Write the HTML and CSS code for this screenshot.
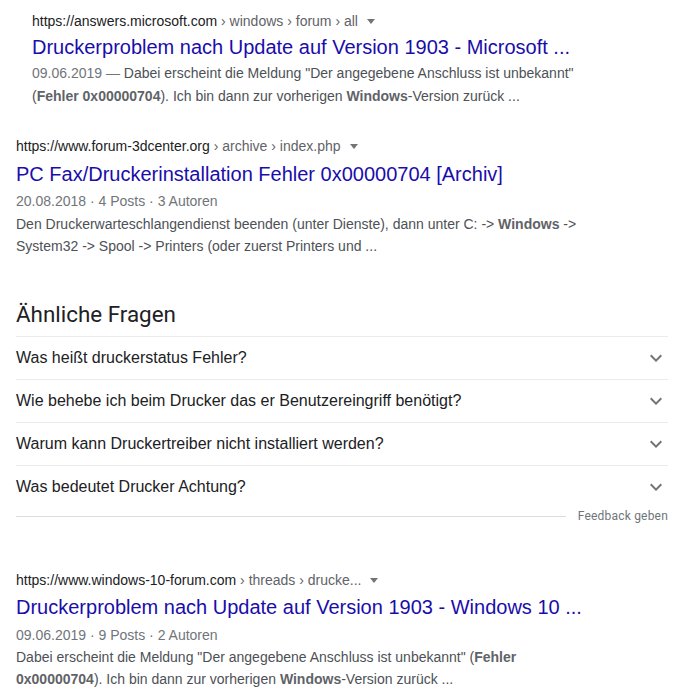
FILE: index.html
```html
<!DOCTYPE html>
<html lang="de">
<head>
<meta charset="utf-8">
<link rel="stylesheet" href="styles.css">
</head>
<body>
<div class="page">
  <div class="result nested">
    <div class="url"><span class="host">https://answers.microsoft.com</span><span class="crumb"> › windows › forum › all</span><span class="caret"></span></div>
    <a class="title">Druckerproblem nach Update auf Version 1903 - Microsoft ...</a>
    <div class="snippet"><span class="date">09.06.2019 — </span>Dabei erscheint die Meldung "Der angegebene Anschluss ist unbekannt" (<b>Fehler 0x00000704</b>). Ich bin dann zur vorherigen <b>Windows</b>-Version zurück ...</div>
  </div>

  <div class="result second">
    <div class="url"><span class="host">https://www.forum-3dcenter.org</span><span class="crumb"> › archive › index.php</span><span class="caret"></span></div>
    <a class="title">PC Fax/Druckerinstallation Fehler 0x00000704 [Archiv]</a>
    <div class="meta">20.08.2018 · 4 Posts · 3 Autoren</div>
    <div class="snippet">Den Druckerwarteschlangendienst beenden (unter Dienste), dann unter C: -&gt; <b>Windows</b> -&gt; System32 -&gt; Spool -&gt; Printers (oder zuerst Printers und ...</div>
  </div>

  <div class="related">
    <h2 class="related-title">Ähnliche Fragen</h2>
    <div class="q"><span>Was heißt druckerstatus Fehler?</span><svg class="chev" viewBox="0 0 24 24" width="24" height="24"><path d="M16.59 8.59L12 13.17 7.41 8.59 6 10l6 6 6-6z"/></svg></div>
    <div class="q"><span>Wie behebe ich beim Drucker das er Benutzereingriff benötigt?</span><svg class="chev" viewBox="0 0 24 24" width="24" height="24"><path d="M16.59 8.59L12 13.17 7.41 8.59 6 10l6 6 6-6z"/></svg></div>
    <div class="q"><span>Warum kann Druckertreiber nicht installiert werden?</span><svg class="chev" viewBox="0 0 24 24" width="24" height="24"><path d="M16.59 8.59L12 13.17 7.41 8.59 6 10l6 6 6-6z"/></svg></div>
    <div class="q"><span>Was bedeutet Drucker Achtung?</span><svg class="chev" viewBox="0 0 24 24" width="24" height="24"><path d="M16.59 8.59L12 13.17 7.41 8.59 6 10l6 6 6-6z"/></svg></div>
    <div class="feedback"><span class="fline"></span><span class="ftext">Feedback geben</span></div>
  </div>

  <div class="result third">
    <div class="url"><span class="host">https://www.windows-10-forum.com</span><span class="crumb"> › threads › drucke...</span><span class="caret"></span></div>
    <a class="title">Druckerproblem nach Update auf Version 1903 - Windows 10 ...</a>
    <div class="meta">09.06.2019 · 9 Posts · 2 Autoren</div>
    <div class="snippet">Dabei erscheint die Meldung "Der angegebene Anschluss ist unbekannt" (<b>Fehler 0x00000704</b>). Ich bin dann zur vorherigen <b>Windows</b>-Version zurück ...</div>
  </div>
</div>
</body>
</html>
```

FILE: styles.css
```css
html, body {
  margin: 0;
  padding: 0;
  background: #fff;
}
body {
  font-family: "Liberation Sans", Arial, sans-serif;
  color: #4d5156;
}
.page {
  width: 652px;
  padding-left: 16px;
  padding-top: 11px;
}
.result {
  display: flex;
  flex-direction: column;
}
.nested {
  margin-left: 16px;
}
.second {
  margin-top: 29px;
}
.third {
  margin-top: 46px;
}
.url {
  font-size: 14px;
  line-height: 20px;
  white-space: nowrap;
}
.host {
  color: #202124;
}
.crumb {
  color: #5f6368;
}
.caret {
  display: inline-block;
  width: 0;
  height: 0;
  border-left: 4px solid transparent;
  border-right: 4px solid transparent;
  border-top: 5px solid #70757a;
  margin-left: 9px;
  vertical-align: middle;
  position: relative;
  top: -1px;
}
.title {
  font-size: 20px;
  line-height: 26px;
  color: #1a0dab;
  margin-top: 3px;
  white-space: nowrap;
}
.second .title {
  margin-top: 5px;
}
.third .title {
  margin-top: 4px;
}
.meta {
  font-size: 14px;
  line-height: 22px;
  color: #70757a;
  margin-top: 3px;
}
.third .meta {
  margin-top: 4px;
}
.snippet {
  font-size: 14px;
  line-height: 22.5px;
  color: #4d5156;
  margin-top: 2px;
  max-width: 580px;
}
.second .snippet {
  margin-top: 1px;
  line-height: 22px;
}
.third .snippet {
  margin-top: 0;
  line-height: 22px;
}
.snippet b {
  color: #5f6368;
  font-weight: bold;
}
.date {
  color: #70757a;
}
.related {
  margin-top: 43px;
}
.related-title {
  font-family: Roboto, "Open Sans", sans-serif;
  font-weight: 400;
  font-size: 22.4px;
  line-height: 28px;
  color: #202124;
  margin: 0 0 8px 0;
}
.q {
  display: flex;
  align-items: center;
  justify-content: space-between;
  border-top: 1px solid #ebebeb;
  height: 42px;
  font-size: 16px;
  color: #202124;
}
.chev {
  fill: #70757a;
  flex: none;
}
.feedback {
  display: flex;
  align-items: center;
  height: 16px;
}
.fline {
  flex: 1;
  height: 1px;
  background: #dadce0;
}
.ftext {
  font-family: Roboto, "Open Sans", sans-serif;
  font-size: 12px;
  color: #70757a;
  margin-left: 12px;
  letter-spacing: 0.2px;
}
```
